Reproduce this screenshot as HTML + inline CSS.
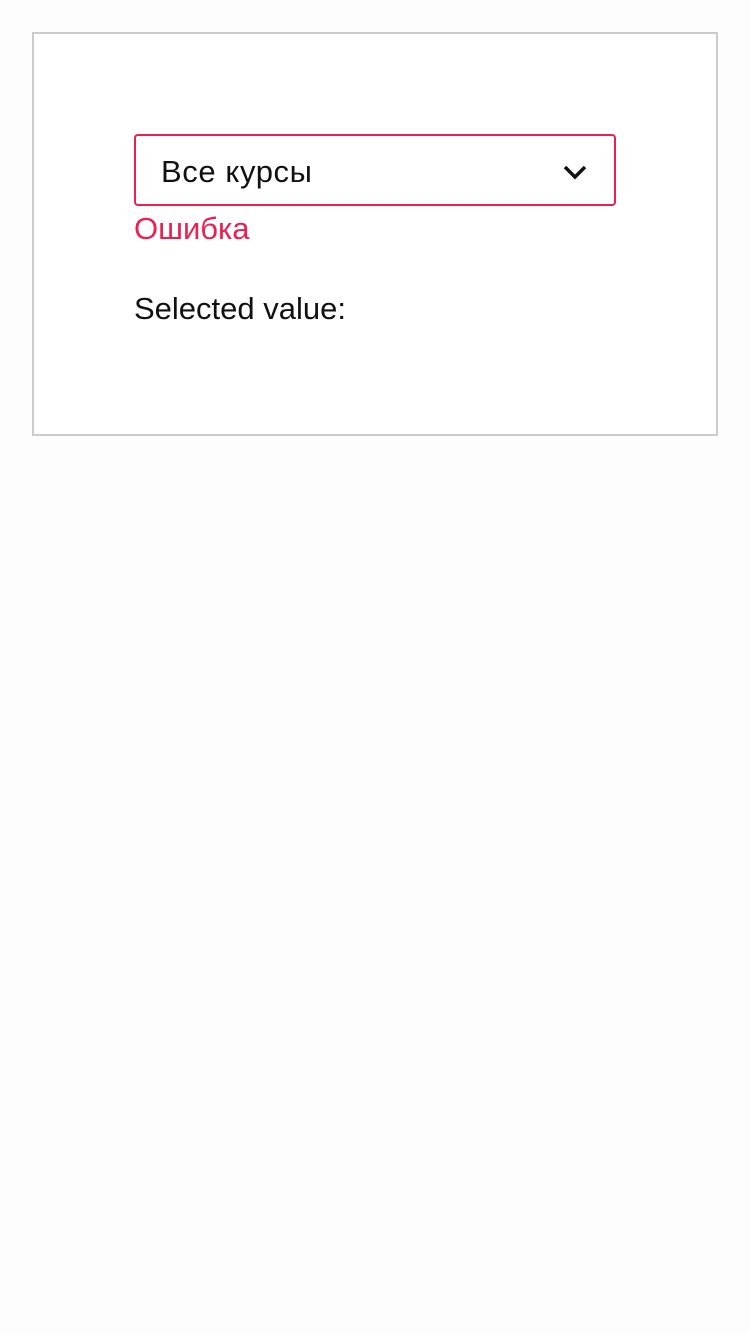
<!DOCTYPE html>
<html><head><meta charset="utf-8"><style>
body{margin:0;background:#fdfdfd;font-family:"Liberation Sans",sans-serif;}
.box{position:absolute;left:32px;top:32px;width:686px;height:404px;border:2px solid #cccccc;box-sizing:border-box;background:#fff;}
.sel{position:absolute;left:134px;top:134px;width:482px;height:72px;border:2px solid #ea1f52;border-radius:4px;box-sizing:border-box;}
.sel span{position:absolute;left:25px;top:18px;font-size:31px;color:#111;letter-spacing:0.6px;}
.err{position:absolute;left:134px;top:211px;font-size:31px;color:#ea1f52;}
.val{position:absolute;left:134px;top:291px;font-size:31px;color:#111;}
</style></head><body>
<div class="box"></div>
<div class="sel"><span>Все курсы</span>
<svg style="position:absolute;left:427px;top:29px" width="24" height="16" viewBox="0 0 24 16"><path d="M2 2 L12 12 L22 2" fill="none" stroke="#111" stroke-width="3.5"/></svg></div>
<div class="err">Ошибка</div>
<div class="val">Selected value:</div>
</body></html>
